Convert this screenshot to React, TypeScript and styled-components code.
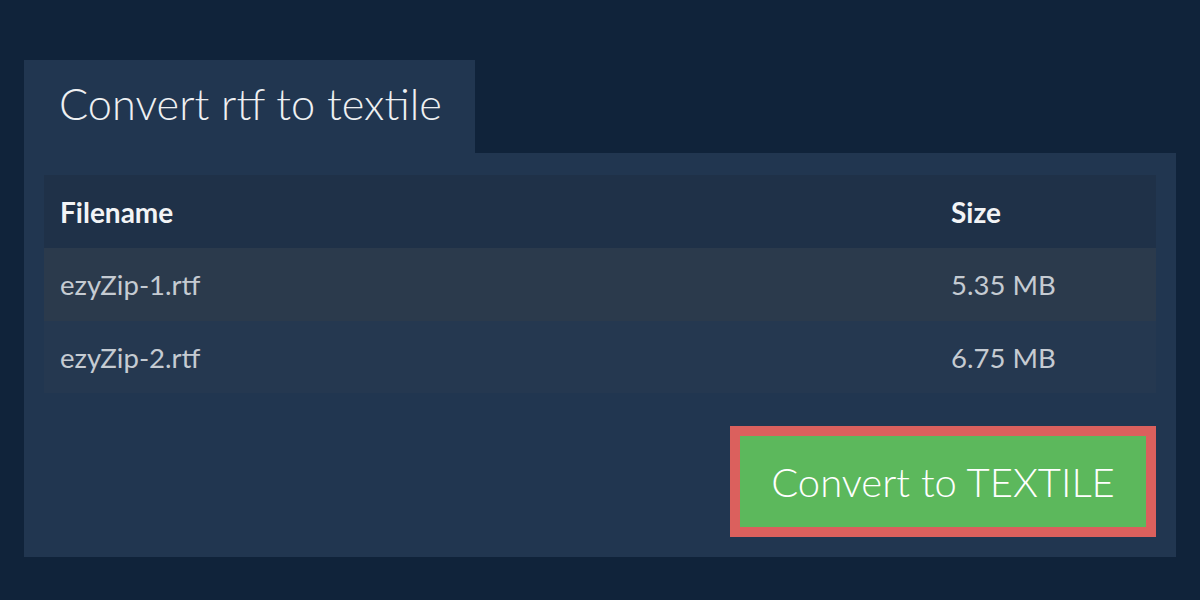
import React from 'react';
import styled, { createGlobalStyle } from 'styled-components';

const GlobalStyle = createGlobalStyle`
  html, body {
    margin: 0;
    padding: 0;
    background: #10233a;
    font-family: Lato, "Open Sans", sans-serif;
  }
`;

const Page = styled.div`
  width: 1200px;
  height: 600px;
  box-sizing: border-box;
  padding: 60px 24px 0 24px;
`;

const Tab = styled.div`
  display: inline-block;
  width: 451px;
  height: 93px;
  box-sizing: border-box;
  padding: 16px 0 0 35px;
  background: #213650;
  color: #eef0f2;
  font-size: 43.3px;
  font-weight: 300;
  line-height: 54px;
`;

const Panel = styled.div`
  background: #213650;
  padding: 22px 20px 20px 20px;
  display: flex;
  flex-direction: column;
`;

const Table = styled.div`
  display: flex;
  flex-direction: column;
`;

const Row = styled.div<{ $bg: string; $head?: boolean; $h: number }>`
  display: grid;
  grid-template-columns: 891px 1fr;
  align-items: center;
  height: ${(p) => p.$h}px;
  padding-left: 16px;
  background: ${(p) => p.$bg};
  color: ${(p) => (p.$head ? '#f2f4f6' : '#c5cbd2')};
  font-size: ${(p) => (p.$head ? 28 : 27.5)}px;
  font-weight: ${(p) => (p.$head ? 700 : 400)};
`;

const Actions = styled.div`
  display: flex;
  justify-content: flex-end;
  padding-top: 33px;
`;

const ConvertButton = styled.button`
  width: 426px;
  height: 111px;
  box-sizing: border-box;
  border: 10px solid #db605d;
  background: #5cb85c;
  color: #ffffff;
  font-family: Lato, "Open Sans", sans-serif;
  font-size: 40px;
  font-weight: 300;
  cursor: pointer;
`;

const files = [
  { name: 'ezyZip-1.rtf', size: '5.35 MB', bg: '#2b3a4c', h: 73 },
  { name: 'ezyZip-2.rtf', size: '6.75 MB', bg: '#253850', h: 72 },
];

export default function App() {
  return (
    <>
      <GlobalStyle />
      <Page>
        <Tab>Convert rtf to textile</Tab>
        <Panel>
          <Table>
            <Row $bg="#1f3148" $head $h={73}>
              <span>Filename</span>
              <span>Size</span>
            </Row>
            {files.map((f) => (
              <Row key={f.name} $bg={f.bg} $h={f.h}>
                <span>{f.name}</span>
                <span>{f.size}</span>
              </Row>
            ))}
          </Table>
          <Actions>
            <ConvertButton>Convert to TEXTILE</ConvertButton>
          </Actions>
        </Panel>
      </Page>
    </>
  );
}
